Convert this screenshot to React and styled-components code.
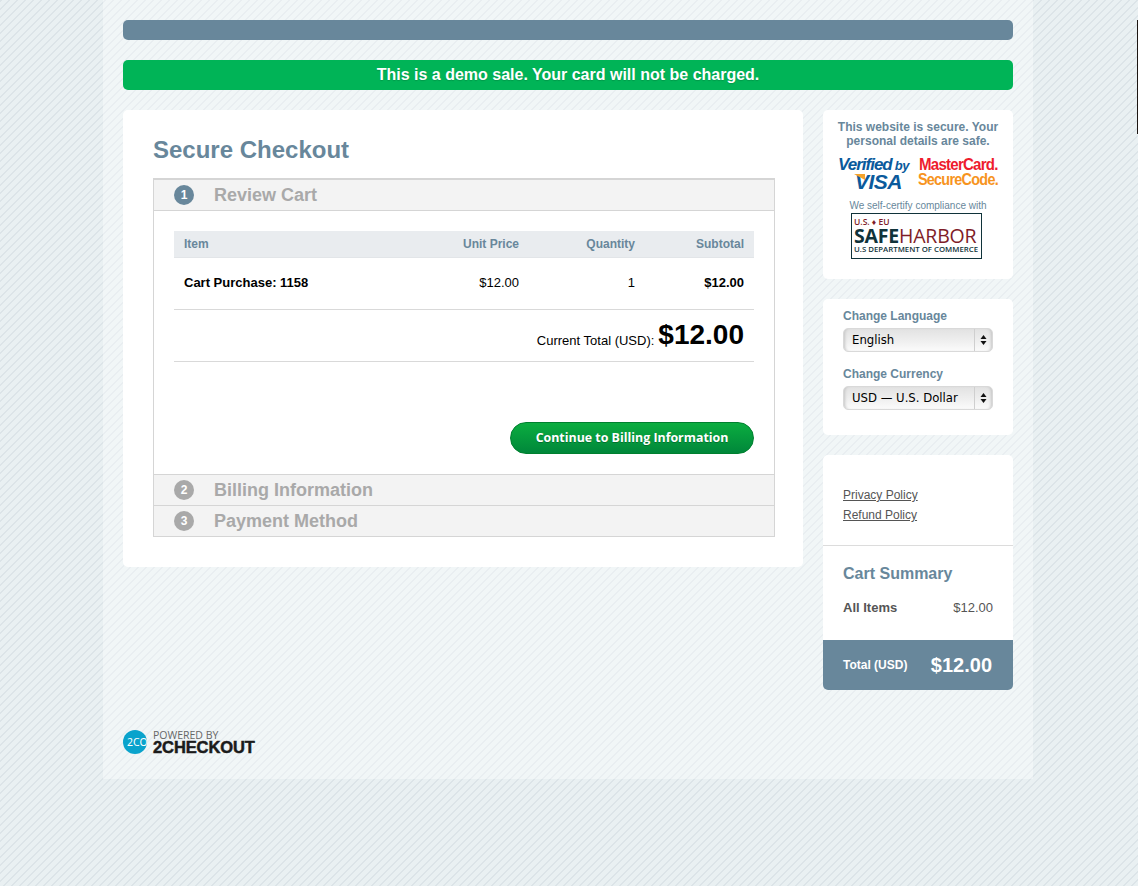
import React from "react";
import styled, { createGlobalStyle } from "styled-components";

const sans = `"Liberation Sans", Arial, sans-serif`;
const slate = "#68879b";
const stripeColor = "#dce4e8";
const stripes = `linear-gradient(135deg, ${stripeColor} 0, ${stripeColor} 13%, transparent 13%, transparent 50%, ${stripeColor} 50%, ${stripeColor} 63%, transparent 63%, transparent 100%)`;

const GlobalStyle = createGlobalStyle`
  html, body {
    margin: 0;
    padding: 0;
    height: 100%;
  }
  body {
    font-family: ${sans};
    font-size: 12px;
    background-color: #e9f0f2;
    background-image: ${stripes};
    background-size: 8px 8px;
  }
`;

const Page = styled.div`
  position: relative;
  width: 1138px;
  height: 886px;
  overflow: hidden;
`;

const EdgeSliver = styled.div`
  position: absolute;
  top: 20px;
  right: 0;
  width: 1px;
  height: 114px;
  background: #1c1512;
`;

const Wrapper = styled.div`
  box-sizing: border-box;
  width: 930px;
  height: 779px;
  margin-left: 103px;
  padding: 20px 20px 0;
  background: rgba(255, 255, 255, 0.38);
`;

const TopBar = styled.div`
  height: 20px;
  border-radius: 5px;
  background: ${slate};
`;

const DemoBanner = styled.div`
  height: 30px;
  margin-top: 20px;
  border-radius: 5px;
  background: #00b457;
  color: #fff;
  font-size: 16px;
  font-weight: 700;
  line-height: 30px;
  text-align: center;
  text-shadow: 0 1px 1px rgba(0, 0, 0, 0.15);
`;

const Columns = styled.div`
  display: flex;
  gap: 20px;
  margin-top: 20px;
  align-items: flex-start;
`;

const MainCard = styled.main`
  box-sizing: border-box;
  width: 680px;
  height: 457px;
  padding: 24px 28px 30px 30px;
  border-radius: 5px;
  background: #fff;
`;

const Title = styled.h1`
  margin: 0;
  height: 44px;
  color: ${slate};
  font-size: 24px;
  font-weight: 700;
  line-height: 31px;
`;

const Accordion = styled.div`
  border: 1px solid #d5d5d5;
  border-top-width: 2px;
`;

const StepHeader = styled.div`
  box-sizing: border-box;
  display: flex;
  align-items: center;
  height: 31px;
  padding-left: 20px;
  background: #f3f3f3;
  border-top: ${({ $divided }) => ($divided ? "1px solid #d5d5d5" : "0")};
  border-bottom: ${({ $open }) => ($open ? "1px solid #d5d5d5" : "0")};
  color: #a9a9a9;
  font-size: 18px;
  font-weight: 700;
`;

const StepNumber = styled.span`
  display: flex;
  align-items: center;
  justify-content: center;
  width: 20px;
  height: 20px;
  margin-right: 20px;
  border-radius: 50%;
  background: ${({ $active }) => ($active ? slate : "#a9a9a9")};
  color: #fff;
  font-size: 12px;
  font-weight: 700;
`;

const StepBody = styled.div`
  box-sizing: border-box;
  height: 263px;
  padding: 20px 20px 0;
`;

const CartGrid = styled.div`
  display: grid;
  grid-template-columns: 1fr 120px 116px 109px;
`;

const HeadCell = styled.div`
  height: 26px;
  padding: 0 ${({ $first }) => ($first ? "0" : "10px")} 0 ${({ $first }) => ($first ? "10px" : "0")};
  background: #e9ecef;
  border-bottom: 1px solid #e2e5e8;
  color: ${slate};
  font-size: 12px;
  font-weight: 700;
  line-height: 26px;
  text-align: ${({ $first }) => ($first ? "left" : "right")};
`;

const BodyCell = styled.div`
  height: 51px;
  padding: 0 ${({ $first }) => ($first ? "0" : "10px")} 0 ${({ $first }) => ($first ? "10px" : "0")};
  border-bottom: 1px solid #d9d9d9;
  color: #000;
  font-size: 13px;
  font-weight: ${({ $bold }) => ($bold ? 700 : 400)};
  line-height: 50px;
  text-align: ${({ $first }) => ($first ? "left" : "right")};
`;

const TotalRow = styled.div`
  display: flex;
  align-items: center;
  justify-content: flex-end;
  gap: 4px;
  height: 51px;
  padding-right: 10px;
  border-bottom: 1px solid #d9d9d9;
  color: #000;
  font-size: 13px;
`;

const TotalLabel = styled.span`
  position: relative;
  top: 5px;
`;

const TotalAmount = styled.span`
  margin-top: -2px;
  font-size: 28px;
  font-weight: 700;
  line-height: 49px;
`;

const ButtonRow = styled.div`
  display: flex;
  justify-content: flex-end;
  margin-top: 60px;
`;

const ContinueButton = styled.button`
  box-sizing: border-box;
  width: 244px;
  height: 32px;
  padding: 0 0 2px;
  border: 1px solid #00802f;
  border-radius: 16px;
  background: linear-gradient(#0bad40, #00873a);
  color: #fff;
  font-family: "Open Sans", "DejaVu Sans", sans-serif;
  font-size: 12.4px;
  font-weight: 700;
  text-shadow: 0 1px 0 rgba(0, 0, 0, 0.25);
`;

const Sidebar = styled.aside`
  display: flex;
  flex-direction: column;
  gap: 20px;
  width: 190px;
`;

const SideCard = styled.section`
  box-sizing: border-box;
  height: ${({ $height }) => $height}px;
  border-radius: 5px;
  background: #fff;
  overflow: hidden;
`;

const SecureCard = styled(SideCard)`
  display: flex;
  flex-direction: column;
  align-items: center;
  padding-top: 10px;
`;

const SecureText = styled.p`
  margin: 0;
  color: ${slate};
  font-size: 12px;
  font-weight: 700;
  line-height: 14px;
  text-align: center;
`;

const Badges = styled.div`
  display: flex;
  justify-content: space-between;
  width: 160px;
  height: 33px;
  margin-top: 9px;
`;

const VisaBadge = styled.div`
  display: flex;
  flex-direction: column;
  width: 72px;
  color: #0a5a9c;
  font-style: italic;
  font-weight: 700;
`;

const VisaTop = styled.span`
  font-size: 17px;
  line-height: 15px;
  letter-spacing: -1px;
  white-space: nowrap;

  small {
    font-size: 13px;
    margin-left: 3px;
    letter-spacing: -0.5px;
  }
`;

const VisaWord = styled.span`
  position: relative;
  align-self: flex-start;
  margin-left: 17px;
  font-size: 21px;
  font-weight: 700;
  line-height: 17px;
  letter-spacing: -0.5px;

  &::before {
    content: "";
    position: absolute;
    left: -1px;
    top: 1px;
    width: 11px;
    height: 6px;
    background: #f4a32b;
    clip-path: polygon(0 0, 100% 0, 100% 100%);
  }
`;

const MastercardBadge = styled.div`
  display: flex;
  flex-direction: column;
  align-items: flex-end;
  width: 78px;
  font-weight: 700;
  letter-spacing: -0.8px;
`;

const McLine = styled.span`
  color: ${({ $color }) => $color};
  font-size: 16px;
  line-height: 15px;
  white-space: nowrap;
  transform: scaleX(${({ $scale }) => $scale});
  transform-origin: right center;
`;

const CertifyText = styled.p`
  margin: 10px 0 0;
  color: ${slate};
  font-size: 10px;
  line-height: 12px;
`;

const HarborBadge = styled.div`
  box-sizing: border-box;
  width: 131px;
  height: 46px;
  margin: 1px 3px 0 0;
  padding: 3px 0 0 2px;
  border: 1px solid #10333a;
  font-family: "Open Sans", sans-serif;
`;

const HarborTop = styled.div`
  color: #7f1d28;
  font-size: 8.5px;
  font-weight: 600;
  line-height: 9px;
`;

const HarborName = styled.div`
  color: #10333a;
  font-size: 19.5px;
  font-weight: 700;
  line-height: 19px;
  letter-spacing: -0.2px;
  white-space: nowrap;

  span {
    color: #7f1d28;
    font-weight: 400;
  }
`;

const HarborBottom = styled.div`
  color: #10333a;
  font-size: 7.8px;
  font-weight: 600;
  line-height: 9px;
  white-space: nowrap;
`;

const LocaleCard = styled(SideCard)`
  padding: 10px 20px 0;
`;

const FieldLabel = styled.label`
  display: block;
  margin-top: ${({ $first }) => ($first ? "0" : "15px")};
  color: ${slate};
  font-size: 12px;
  font-weight: 700;
  line-height: 14px;
`;

const SelectWrap = styled.div`
  position: relative;
  height: 24px;
  margin-top: 5px;

  &::after {
    content: "";
    position: absolute;
    top: 1px;
    bottom: 1px;
    right: 18px;
    width: 1px;
    background: #cfcfcf;
  }
`;

const NativeSelect = styled.select`
  appearance: none;
  box-sizing: border-box;
  display: block;
  width: 150px;
  height: 24px;
  padding: 0 0 0 8px;
  border: 1px solid #d9d9d9;
  border-radius: 5px;
  background: linear-gradient(#e2e2e2, #efefef 55%, #fbfbfb);
  box-shadow: inset 3px 0 3px -2px #c4c4c4, inset -3px 0 3px -2px #c4c4c4;
  color: #000;
  font-family: "DejaVu Sans", Verdana, sans-serif;
  font-size: 11.7px;
`;

const SelectArrows = styled.svg`
  position: absolute;
  top: 7px;
  right: 6px;
  pointer-events: none;
`;

const SummaryCard = styled(SideCard)`
  display: flex;
  flex-direction: column;
`;

const PolicyLinks = styled.div`
  display: flex;
  flex-direction: column;
  gap: 6px;
  height: 91px;
  box-sizing: border-box;
  padding: 33px 20px 0;
  border-bottom: 1px solid #dcdcdc;
`;

const PolicyLink = styled.a`
  color: #555;
  font-size: 12px;
  line-height: 14px;
  text-decoration: underline;
`;

const SummaryTitle = styled.h2`
  margin: 19px 20px 0;
  color: ${slate};
  font-size: 16px;
  font-weight: 700;
  line-height: 18px;
`;

const SummaryRow = styled.div`
  display: flex;
  justify-content: space-between;
  margin: 17px 20px 0;
  color: #555;
  font-size: 13px;
  line-height: 15px;
`;

const SummaryItems = styled.span`
  font-weight: 700;
`;

const SummaryTotal = styled.div`
  display: flex;
  align-items: center;
  justify-content: space-between;
  height: 50px;
  margin-top: auto;
  padding: 0 21px 0 20px;
  background: ${slate};
  color: #fff;
  font-weight: 700;
`;

const SummaryTotalLabel = styled.span`
  font-size: 12px;
`;

const SummaryTotalAmount = styled.span`
  font-size: 20px;
`;

const Footer = styled.footer`
  display: flex;
  align-items: flex-start;
  gap: 6px;
  margin-top: 40px;
`;

const LogoDisc = styled.div`
  box-sizing: border-box;
  width: 24px;
  height: 24px;
  border-radius: 50%;
  background: #0aa3cc;
  color: #fff;
  font-family: "Noto Sans", sans-serif;
  font-size: 10.5px;
  line-height: 24px;
  padding-left: 4px;
  white-space: nowrap;
  overflow: hidden;
`;

const LogoText = styled.div`
  display: flex;
  flex-direction: column;
`;

const PoweredBy = styled.span`
  color: #666;
  font-family: "Open Sans", sans-serif;
  font-size: 10.5px;
  font-weight: 400;
  line-height: 11px;
`;

const BrandName = styled.span`
  color: #1b1b1b;
  font-family: "Liberation Sans", sans-serif;
  font-size: 16.5px;
  font-weight: 700;
  line-height: 13px;
  letter-spacing: -0.1px;
  -webkit-text-stroke: 0.5px #1b1b1b;
`;

const Arrows = () => (
  <SelectArrows width="7" height="10" viewBox="0 0 7 10">
    <path d="M3.5 0 L6.5 4 L0.5 4 Z M0.5 6 L6.5 6 L3.5 10 Z" fill="#111" />
  </SelectArrows>
);

const cartRows = [["Cart Purchase: 1158", "$12.00", "1", "$12.00"]];

const App = () => (
  <>
    <GlobalStyle />
    <Page>
      <EdgeSliver />
      <Wrapper>
        <TopBar />
        <DemoBanner>This is a demo sale. Your card will not be charged.</DemoBanner>
        <Columns>
          <MainCard>
            <Title>Secure Checkout</Title>
            <Accordion>
              <StepHeader $open>
                <StepNumber $active>1</StepNumber>
                Review Cart
              </StepHeader>
              <StepBody>
                <CartGrid>
                  <HeadCell $first>Item</HeadCell>
                  <HeadCell>Unit Price</HeadCell>
                  <HeadCell>Quantity</HeadCell>
                  <HeadCell>Subtotal</HeadCell>
                  {cartRows.map(([name, price, qty, subtotal]) => (
                    <React.Fragment key={name}>
                      <BodyCell $first $bold>{name}</BodyCell>
                      <BodyCell>{price}</BodyCell>
                      <BodyCell>{qty}</BodyCell>
                      <BodyCell $bold>{subtotal}</BodyCell>
                    </React.Fragment>
                  ))}
                </CartGrid>
                <TotalRow>
                  <TotalLabel>Current Total (USD):</TotalLabel>
                  <TotalAmount>$12.00</TotalAmount>
                </TotalRow>
                <ButtonRow>
                  <ContinueButton>Continue to Billing Information</ContinueButton>
                </ButtonRow>
              </StepBody>
              <StepHeader $divided>
                <StepNumber>2</StepNumber>
                Billing Information
              </StepHeader>
              <StepHeader $divided>
                <StepNumber>3</StepNumber>
                Payment Method
              </StepHeader>
            </Accordion>
          </MainCard>
          <Sidebar>
            <SecureCard $height={169}>
              <SecureText>
                This website is secure. Your
                <br />
                personal details are safe.
              </SecureText>
              <Badges>
                <VisaBadge>
                  <VisaTop>
                    Verified<small>by</small>
                  </VisaTop>
                  <VisaWord>VISA</VisaWord>
                </VisaBadge>
                <MastercardBadge>
                  <McLine $color="#ee1c2e" $scale={0.94}>MasterCard.</McLine>
                  <McLine $color="#f7941e" $scale={0.9}>SecureCode.</McLine>
                </MastercardBadge>
              </Badges>
              <CertifyText>We self-certify compliance with</CertifyText>
              <HarborBadge>
                <HarborTop>U.S. ♦ EU</HarborTop>
                <HarborName>
                  SAFE<span>HARBOR</span>
                </HarborName>
                <HarborBottom>U.S DEPARTMENT OF COMMERCE</HarborBottom>
              </HarborBadge>
            </SecureCard>
            <LocaleCard $height={136}>
              <FieldLabel $first>Change Language</FieldLabel>
              <SelectWrap>
                <NativeSelect defaultValue="en" aria-label="Change Language">
                  <option value="en">English</option>
                </NativeSelect>
                <Arrows />
              </SelectWrap>
              <FieldLabel>Change Currency</FieldLabel>
              <SelectWrap>
                <NativeSelect defaultValue="usd" aria-label="Change Currency">
                  <option value="usd">USD — U.S. Dollar</option>
                </NativeSelect>
                <Arrows />
              </SelectWrap>
            </LocaleCard>
            <SummaryCard $height={235}>
              <PolicyLinks>
                <PolicyLink>Privacy Policy</PolicyLink>
                <PolicyLink>Refund Policy</PolicyLink>
              </PolicyLinks>
              <SummaryTitle>Cart Summary</SummaryTitle>
              <SummaryRow>
                <SummaryItems>All Items</SummaryItems>
                <span>$12.00</span>
              </SummaryRow>
              <SummaryTotal>
                <SummaryTotalLabel>Total (USD)</SummaryTotalLabel>
                <SummaryTotalAmount>$12.00</SummaryTotalAmount>
              </SummaryTotal>
            </SummaryCard>
          </Sidebar>
        </Columns>
        <Footer>
          <LogoDisc>2CO</LogoDisc>
          <LogoText>
            <PoweredBy>POWERED BY</PoweredBy>
            <BrandName>2CHECKOUT</BrandName>
          </LogoText>
        </Footer>
      </Wrapper>
    </Page>
  </>
);

export default App;
